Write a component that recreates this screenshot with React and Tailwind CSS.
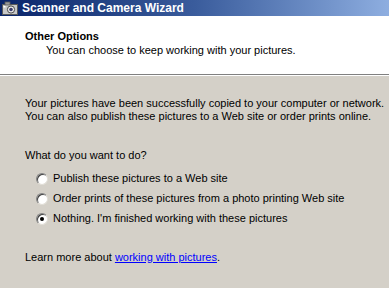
import React, { useState } from 'react';

const options = [
  'Publish these pictures to a Web site',
  'Order prints of these pictures from a photo printing Web site',
  "Nothing. I'm finished working with these pictures",
];

const Radio = ({ checked }) => (
  <span className="relative w-[12px] h-[12px] rounded-full bg-white border border-t-[#808080] border-l-[#808080] border-b-[#e0ddd6] border-r-[#e0ddd6] shadow-[inset_1px_1px_0_#404040] flex items-center justify-center shrink-0">
    {checked && <span className="w-[4px] h-[4px] rounded-full bg-black" />}
  </span>
);

const CameraIcon = () => (
  <svg width="16" height="14" viewBox="0 0 16 14">
    <rect x="0.5" y="3.5" width="15" height="10" fill="#c8c8c8" stroke="#5a5a5a" />
    <rect x="3" y="1" width="5" height="3" fill="#9a9a9a" stroke="#5a5a5a" strokeWidth="0.8" />
    <circle cx="9" cy="8.5" r="3.6" fill="#ececec" stroke="#4a4a4a" />
    <circle cx="9" cy="8.5" r="1.8" fill="#3a3a6a" />
    <rect x="1.5" y="5" width="2" height="1.5" fill="#ffffff" />
  </svg>
);

const App = () => {
  const [choice, setChoice] = useState(2);

  return (
    <div className="w-[389px] h-[288px] overflow-hidden bg-[#d4d0c8] text-black text-[11px] font-['Liberation_Sans',Arial,sans-serif]">
      <div className="h-[16px] flex items-center gap-[4px] pl-[2px] bg-gradient-to-r from-[#0a246a] via-[#3a5c9c] to-[#8eaee0]">
        <CameraIcon />
        <span className="text-white font-bold text-[12px] leading-none">Scanner and Camera Wizard</span>
      </div>

      <div className="h-[59px] bg-white pl-[25px] pt-[14px] border-b border-[#808080]">
        <div className="font-bold leading-[13px]">Other Options</div>
        <div className="pl-[21px] leading-[13px] mt-[1px]">You can choose to keep working with your pictures.</div>
      </div>
      <div className="h-px bg-white" />

      <div className="pl-[25px] pt-[21px]">
        <div className="leading-[13px]">Your pictures have been successfully copied to your computer or network.</div>
        <div className="leading-[13px]">You can also publish these pictures to a Web site or order prints online.</div>

        <div className="mt-[26px] leading-[13px]">What do you want to do?</div>

        <div className="mt-[10px] pl-[11px] flex flex-col gap-[7px]">
          {options.map((label, i) => (
            <label key={i} className="flex items-center gap-[5px] leading-[13px] cursor-default" onClick={() => setChoice(i)}>
              <Radio checked={choice === i} />
              <span>{label}</span>
            </label>
          ))}
        </div>

        <div className="mt-[26px] leading-[13px]">
          Learn more about <a href="#" className="text-[#0000ff] underline">working with pictures</a>.
        </div>
      </div>
    </div>
  );
};

export default App;
